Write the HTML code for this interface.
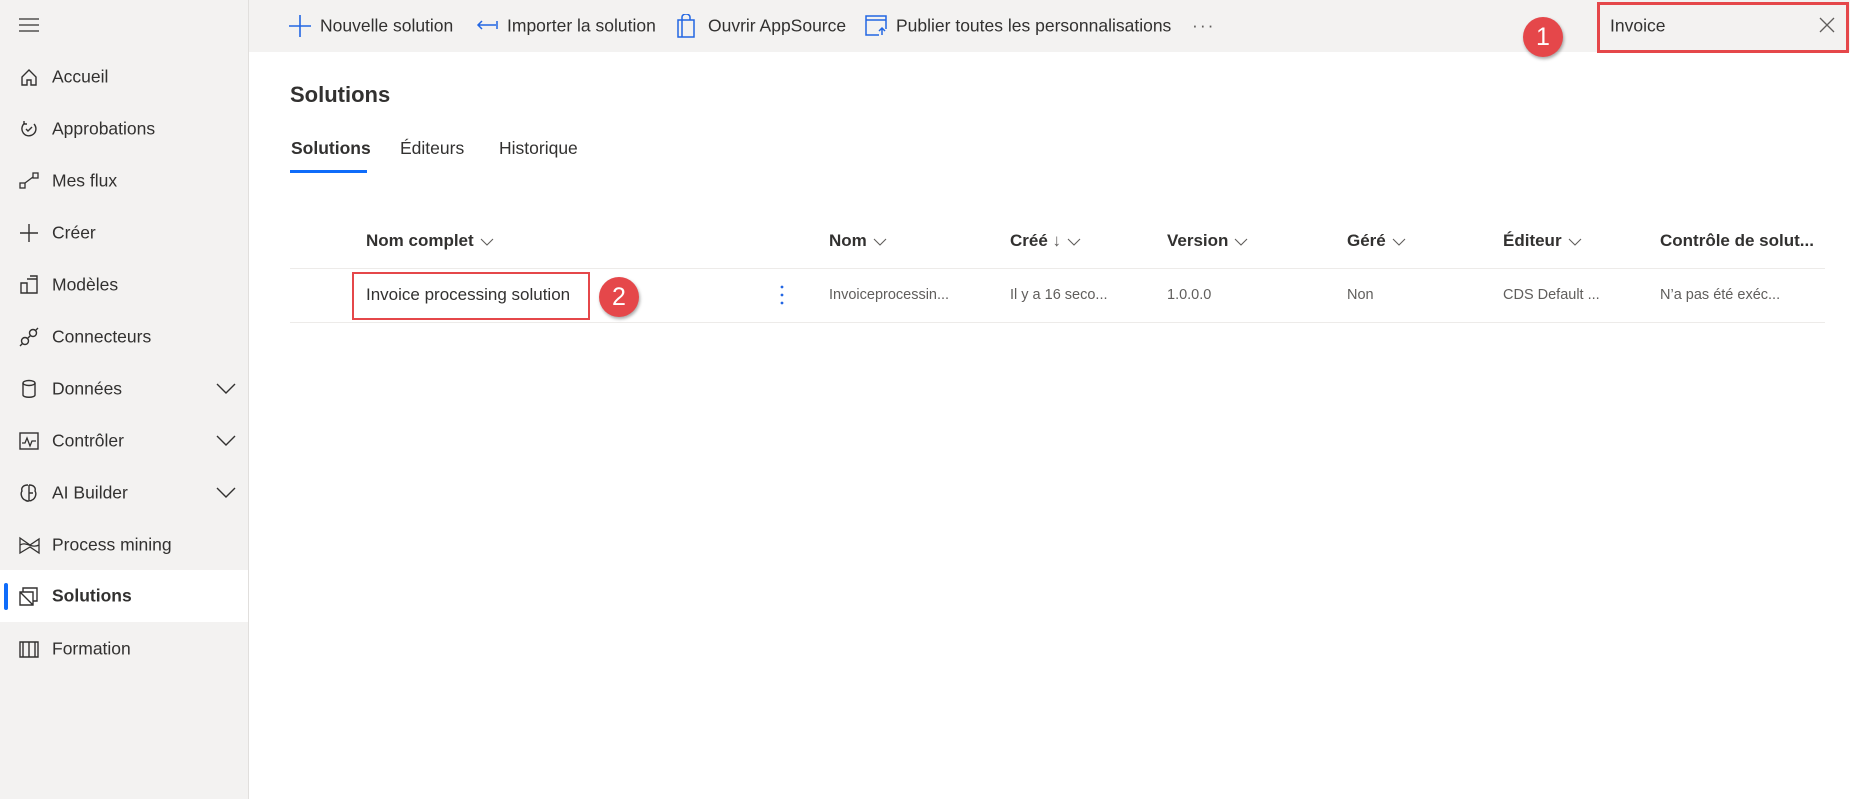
<!DOCTYPE html>
<html><head><meta charset="utf-8"><style>
*{margin:0;padding:0;box-sizing:border-box}
body{width:1850px;height:799px;overflow:hidden;background:#fff;font-family:"Liberation Sans",sans-serif;color:#323130;position:relative}
.abs{position:absolute;white-space:nowrap}
#side{position:absolute;left:0;top:0;width:249px;height:799px;background:#f3f2f1;border-right:1px solid #e1dfdd}
#top{position:absolute;left:249px;top:0;width:1601px;height:52px;background:#f3f2f1}
.nav{position:absolute;left:0;width:248px;height:52px}
.nav .t{position:absolute;left:52px;top:50%;transform:translateY(-50%);font-size:17.5px;color:#323130}
.nav svg{position:absolute;left:19px;top:50%;transform:translateY(-50%)}
.nav .chev{left:auto;right:12px}
.tb{position:absolute;top:26px;transform:translateY(-50%);font-size:17.5px;color:#323130;white-space:nowrap}
.hd{position:absolute;top:241px;transform:translateY(-50%);font-size:17px;font-weight:bold;color:#323130;white-space:nowrap}
.hd svg{margin-left:6px;vertical-align:middle}
.cell{position:absolute;top:295px;transform:translateY(-50%);font-size:14.5px;color:#605e5c;white-space:nowrap}
.badge{position:absolute;width:40px;height:40px;border-radius:50%;background:#e5474a;color:#fff;font-size:25px;text-align:center;line-height:40px;box-shadow:1px 2px 3px rgba(0,0,0,.35)}
</style></head><body>
<div id="side">
 <svg style="position:absolute;left:19px;top:17px" width="20" height="16"><path d="M0 2h20M0 8h20M0 14h20" stroke="#323130" stroke-width="1.3"/></svg>
 <div class="nav" style="top:51px"><svg width="20" height="20"><path d="M3 10L10 3l7 7v8h-5v-5H8v5H3z" fill="none" stroke="#323130" stroke-width="1.4"/></svg><span class="t">Accueil</span></div>
 <div class="nav" style="top:103px"><svg width="20" height="20"><path d="M15 5a7 7 0 1 1-9-1M5 2v3h3M7 10l2 2 4-4" fill="none" stroke="#323130" stroke-width="1.4"/></svg><span class="t">Approbations</span></div>
 <div class="nav" style="top:155px"><svg width="20" height="20"><rect x="1" y="12" width="5" height="5" fill="none" stroke="#323130" stroke-width="1.3"/><rect x="14" y="2" width="5" height="5" fill="none" stroke="#323130" stroke-width="1.3"/><path d="M6 12l8-6" stroke="#323130" stroke-width="1.3"/></svg><span class="t">Mes flux</span></div>
 <div class="nav" style="top:207px"><svg width="20" height="20"><path d="M10 1v18M1 10h18" stroke="#323130" stroke-width="1.4"/></svg><span class="t">Créer</span></div>
 <div class="nav" style="top:259px"><svg width="20" height="20"><path d="M2 8h6v10H2zM8 4h10v14H8M11 1h7v3" fill="none" stroke="#323130" stroke-width="1.4"/></svg><span class="t">Modèles</span></div>
 <div class="nav" style="top:311px"><svg width="20" height="20"><circle cx="6" cy="14" r="3.5" fill="none" stroke="#323130" stroke-width="1.4"/><circle cx="14" cy="6" r="3.5" fill="none" stroke="#323130" stroke-width="1.4"/><path d="M1 19l3-3M16 4l3-3M8 12l4-4" stroke="#323130" stroke-width="1.4"/></svg><span class="t">Connecteurs</span></div>
 <div class="nav" style="top:363px"><svg width="20" height="20"><ellipse cx="10" cy="4" rx="6" ry="2.5" fill="none" stroke="#323130" stroke-width="1.4"/><path d="M4 4v12c0 3 12 3 12 0V4" fill="none" stroke="#323130" stroke-width="1.4"/></svg><span class="t">Données</span><svg class="chev" width="20" height="12"><path d="M1 1l9 9 9-9" fill="none" stroke="#323130" stroke-width="1.4"/></svg></div>
 <div class="nav" style="top:415px"><svg width="20" height="20"><rect x="1" y="2" width="18" height="16" fill="none" stroke="#323130" stroke-width="1.4"/><path d="M3 12h3l2-5 3 8 2-5h4" fill="none" stroke="#323130" stroke-width="1.3"/></svg><span class="t">Contrôler</span><svg class="chev" width="20" height="12"><path d="M1 1l9 9 9-9" fill="none" stroke="#323130" stroke-width="1.4"/></svg></div>
 <div class="nav" style="top:467px"><svg width="20" height="20"><path d="M9 2C4 2 2 5 3 8 1 11 3 16 6 17c2 2 5 1 4 0V2M10 2c5 0 7 3 6 6 2 3 0 8-3 9-1 1-3 1-3 0M10 10h4" fill="none" stroke="#323130" stroke-width="1.4"/></svg><span class="t">AI Builder</span><svg class="chev" width="20" height="12"><path d="M1 1l9 9 9-9" fill="none" stroke="#323130" stroke-width="1.4"/></svg></div>
 <div class="nav" style="top:519px"><svg width="22" height="20"><path d="M1 3l10 7 9-6v14l-9-6-10 6zM1 10c6-4 12 4 19 0" fill="none" stroke="#323130" stroke-width="1.3"/></svg><span class="t">Process mining</span></div>
 <div class="nav" style="top:570px;background:#fff"><div style="position:absolute;left:4px;top:13px;width:4px;height:27px;border-radius:2px;background:#0f6cfa"></div><svg width="20" height="20"><path d="M1 6h13v13H1zM4 6V2h14v13h-4M1 6l13 13" fill="none" stroke="#323130" stroke-width="1.4"/></svg><span class="t" style="font-weight:bold">Solutions</span></div>
 <div class="nav" style="top:623px"><svg width="20" height="20"><path d="M1 3h18v15H1zM4 3v15M10 3v15M16 3v15" fill="none" stroke="#323130" stroke-width="1.4"/></svg><span class="t">Formation</span></div>
</div>
<div id="top"></div>
<svg class="abs" style="left:289px;top:15px" width="22" height="22"><path d="M11 0v22M0 11h22" stroke="#2266e3" stroke-width="1.6"/></svg>
<span class="tb" style="left:320px">Nouvelle solution</span>
<svg class="abs" style="left:476px;top:19px" width="22" height="12"><path d="M21 2v8M20 6H2M6 2L2 6l4 4" fill="none" stroke="#2266e3" stroke-width="1.5"/></svg>
<span class="tb" style="left:507px">Importer la solution</span>
<svg class="abs" style="left:677px;top:14px" width="18" height="24"><path d="M1 6h16v17H1zM5 6V3a4 3 0 0 1 8 0v3M5 6v17" fill="none" stroke="#2266e3" stroke-width="1.5"/></svg>
<span class="tb" style="left:708px">Ouvrir AppSource</span>
<svg class="abs" style="left:865px;top:15px" width="22" height="22"><path d="M14 20H1V1h20v13M1 5h20M17 20v-6M14 16l3-3 3 3" fill="none" stroke="#2266e3" stroke-width="1.5"/></svg>
<span class="tb" style="left:896px">Publier toutes les personnalisations</span>
<span class="tb" style="left:1192px;color:#605e5c;letter-spacing:2px">···</span>
<div class="badge" style="left:1523px;top:17px">1</div>
<div class="abs" style="left:1597px;top:2px;width:252px;height:51px;border:3px solid #e5474a;background:#f3f2f1"></div>
<span class="tb" style="left:1610px">Invoice</span>
<svg class="abs" style="left:1819px;top:17px" width="16" height="16"><path d="M1 1l14 14M15 1L1 15" stroke="#605e5c" stroke-width="1.3"/></svg>
<div class="abs" style="left:290px;top:82px;font-size:22px;font-weight:bold;color:#323130">Solutions</div>
<div class="abs" style="left:291px;top:138px;font-size:17.5px;font-weight:bold">Solutions</div>
<div class="abs" style="left:400px;top:138px;font-size:17.5px">Éditeurs</div>
<div class="abs" style="left:499px;top:138px;font-size:17.5px">Historique</div>
<div class="abs" style="left:290px;top:170px;width:77px;height:3px;background:#0f6cfa"></div>
<span class="hd" style="left:366px">Nom complet<svg width="14" height="8"><path d="M1 1l6 6 6-6" fill="none" stroke="#605e5c" stroke-width="1.1"/></svg></span>
<span class="hd" style="left:829px">Nom<svg width="14" height="8"><path d="M1 1l6 6 6-6" fill="none" stroke="#605e5c" stroke-width="1.1"/></svg></span>
<span class="hd" style="left:1010px">Créé <span style="font-weight:normal;color:#605e5c">↓</span><svg width="14" height="8"><path d="M1 1l6 6 6-6" fill="none" stroke="#605e5c" stroke-width="1.1"/></svg></span>
<span class="hd" style="left:1167px">Version<svg width="14" height="8"><path d="M1 1l6 6 6-6" fill="none" stroke="#605e5c" stroke-width="1.1"/></svg></span>
<span class="hd" style="left:1347px">Géré<svg width="14" height="8"><path d="M1 1l6 6 6-6" fill="none" stroke="#605e5c" stroke-width="1.1"/></svg></span>
<span class="hd" style="left:1503px">Éditeur<svg width="14" height="8"><path d="M1 1l6 6 6-6" fill="none" stroke="#605e5c" stroke-width="1.1"/></svg></span>
<span class="hd" style="left:1660px">Contrôle de solut...</span>
<div class="abs" style="left:290px;top:268px;width:1535px;height:1px;background:#edebe9"></div>
<div class="abs" style="left:290px;top:322px;width:1535px;height:1px;background:#edebe9"></div>
<div class="abs" style="left:352px;top:272px;width:238px;height:48px;border:2px solid #e5474a"></div>
<span class="cell" style="left:366px;font-size:17px;color:#323130">Invoice processing solution</span>
<div class="badge" style="left:599px;top:277px">2</div>
<svg class="abs" style="left:779px;top:285px" width="6" height="20"><circle cx="3" cy="2" r="1.4" fill="#2266e3"/><circle cx="3" cy="10" r="1.4" fill="#2266e3"/><circle cx="3" cy="18" r="1.4" fill="#2266e3"/></svg>
<span class="cell" style="left:829px">Invoiceprocessin...</span>
<span class="cell" style="left:1010px">Il y a 16 seco...</span>
<span class="cell" style="left:1167px">1.0.0.0</span>
<span class="cell" style="left:1347px">Non</span>
<span class="cell" style="left:1503px">CDS Default ...</span>
<span class="cell" style="left:1660px">N’a pas été exéc...</span>
</body></html>
